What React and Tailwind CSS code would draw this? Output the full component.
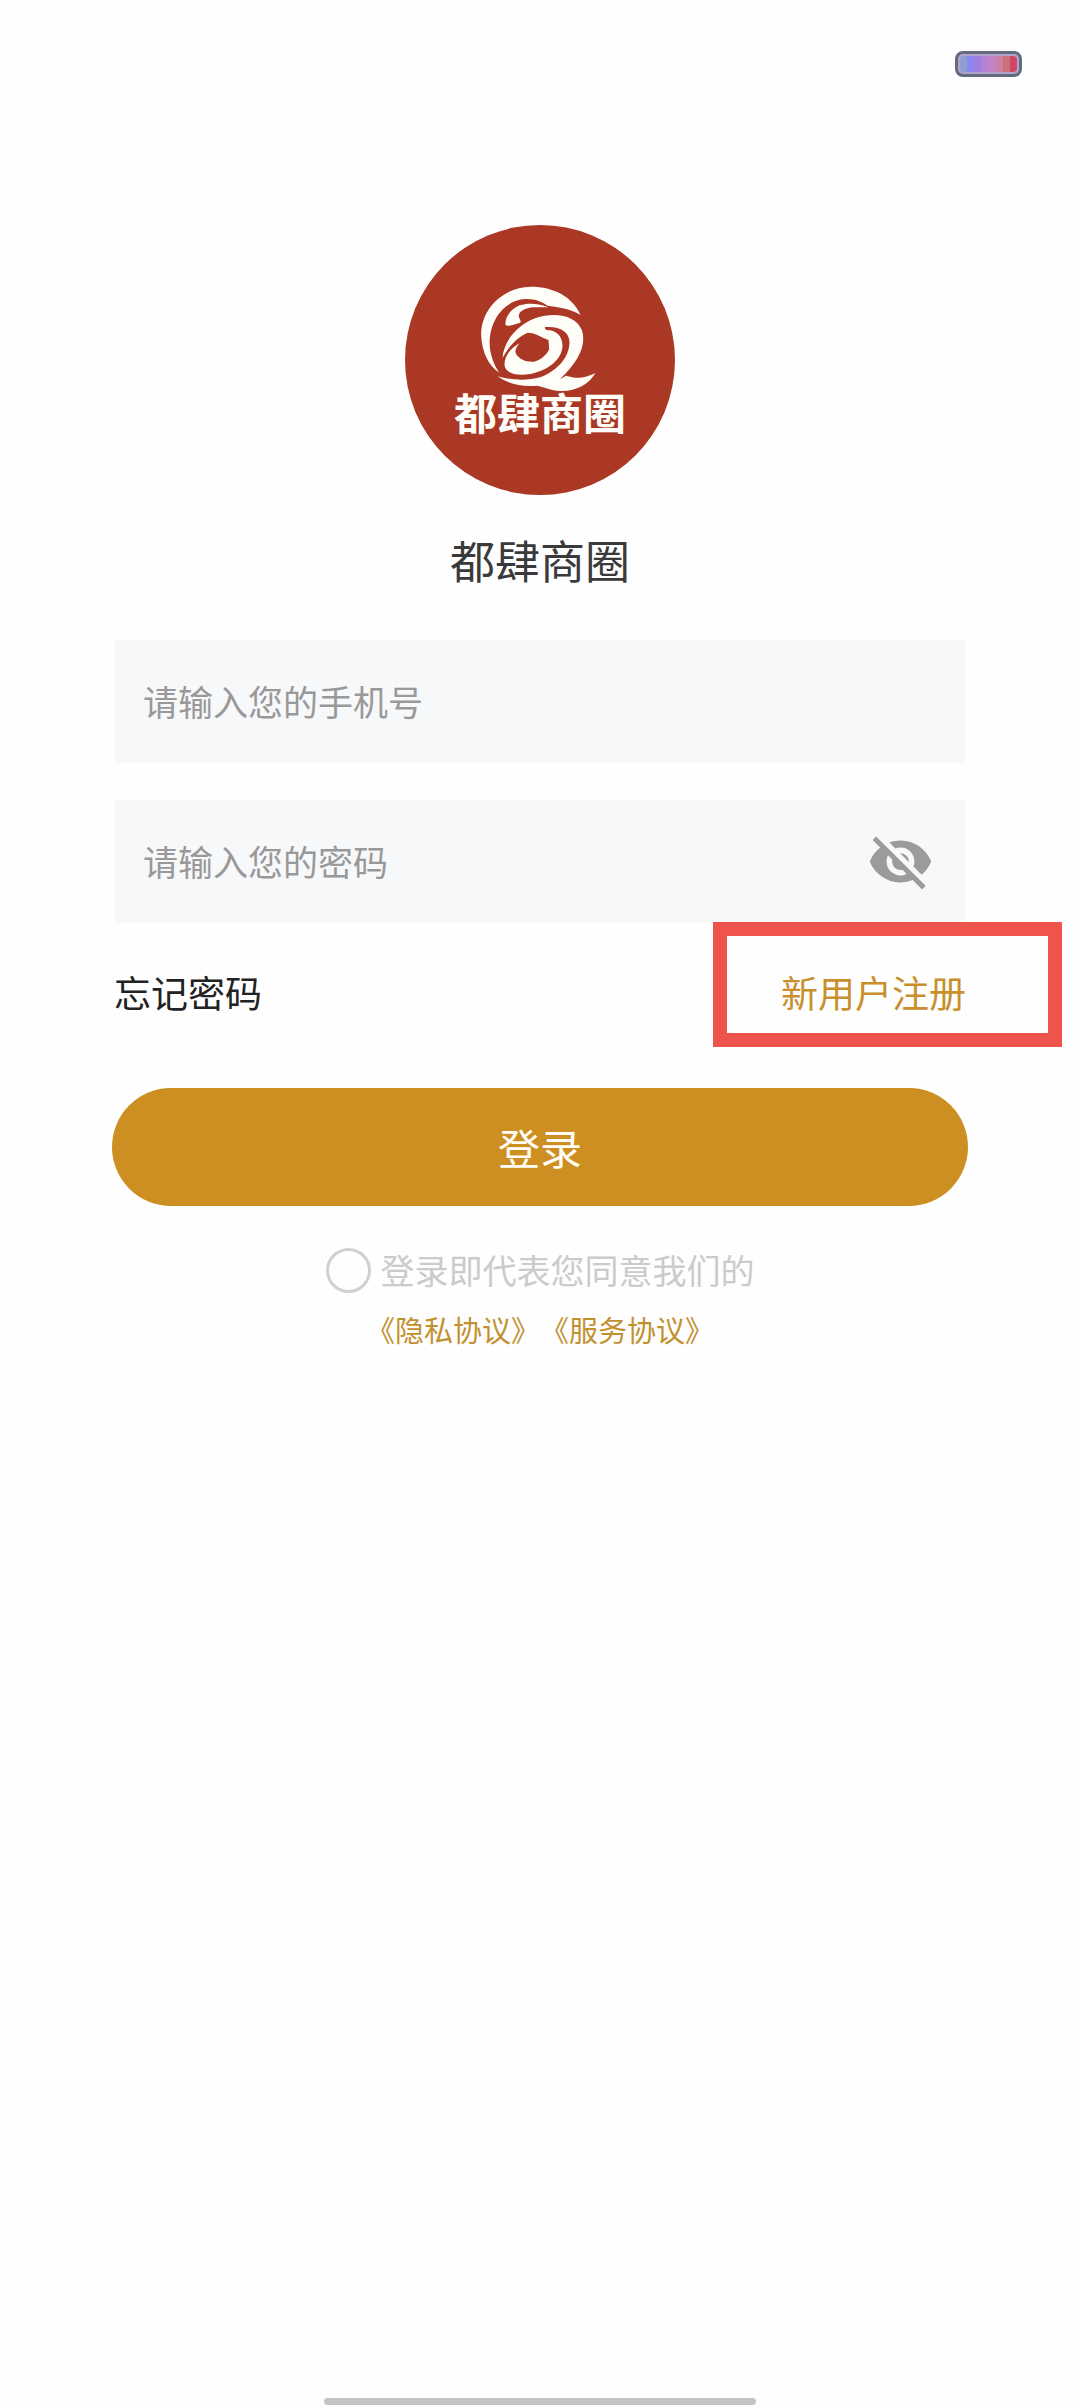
import React, { useState } from "react";
import { MdVisibility, MdVisibilityOff } from "react-icons/md";

const batteryColors = [
  "bg-[#8f9fd0]",
  "bg-[#8a86ee]",
  "bg-[#9d80e2]",
  "bg-[#b681d6]",
  "bg-[#c583c6]",
  "bg-[#cd7fa3]",
  "bg-[#cc7277]",
  "bg-[#d04669]",
];

const StatusBar = () => (
  <div className="flex justify-end pt-[51px] pr-[58px]">
    <div className="flex h-[26px] w-[67px] rounded-lg border-3 border-[#636b7f] bg-[#b3a3cc] px-[2px] py-[2px]">
      {batteryColors.map((color) => (
        <span key={color} className={`flex-1 first:rounded-l-sm last:rounded-r-sm ${color}`} />
      ))}
    </div>
  </div>
);

const Logo = () => (
  <div className="flex size-[270px] flex-col items-center rounded-full bg-[#aa3824] pt-[61px] text-[#fffdf8]">
    <svg viewBox="60 48 350 318" className="mr-1 h-[106px] w-[117px]" fill="currentColor" aria-hidden="true">
      <path d="M361 135C338 80 280 50 212 50C130 52 62 115 63 196C65 245 85 288 117 308C96 275 86 240 89 205C94 140 140 90 195 87C225 86 245 95 262 107C290 112 325 112 361 135Z" />
      <path d="M264 112C240 101 205 97 178 106C150 118 134 143 136 164C142 172 160 164 180 158C184 152 178 147 176 140C174 124 195 114 220 112Z" />
      <path d="M127 264C130 215 170 165 225 145C285 125 345 135 365 180C380 225 355 275 299 328L318 317C345 325 365 328 406 309C385 345 345 365 300 363C270 361 255 352 232 347C185 352 140 340 112 319C150 330 200 333 240 322C295 300 328 260 328 215C326 185 300 168 255 171C252 177 258 181 270 181C295 186 308 205 307 230C303 270 265 300 210 312C170 318 135 310 133 285C132 260 150 235 178 220C170 230 163 240 167 250C175 268 200 278 222 275C245 270 262 250 267 238L265 210C245 203 225 188 203 188C165 205 145 232 127 264Z" />
    </svg>
    <span className="text-[43px] leading-[39px] font-bold">都肆商圈</span>
  </div>
);

const fieldClass =
  "flex h-[122px] items-center bg-[#f7f8fa] pl-7 pr-[31px] shadow-[0_0_4px_#f7f8fa]";
const inputClass =
  "min-w-0 flex-1 bg-transparent text-[35px] leading-[48px] text-[#222] outline-none placeholder:text-[#999]";

const App = () => {
  const [phone, setPhone] = useState("");
  const [password, setPassword] = useState("");
  const [showPassword, setShowPassword] = useState(false);
  const [agreed, setAgreed] = useState(false);

  return (
    <div className="flex min-h-screen flex-col bg-[#fefefe] font-['Noto_Sans_CJK_SC',sans-serif]">
      <StatusBar />

      <main className="mt-[148px] flex flex-col items-center px-28">
        <Logo />
        <h1 className="mt-9 text-[45px] leading-[58px] font-normal text-[#3a3a3a]">都肆商圈</h1>

        <form className="mt-[51px] w-full" onSubmit={(e) => e.preventDefault()}>
          <div className="flex flex-col gap-[38px] px-[3px]">
            <div className={fieldClass}>
              <input
                type="tel"
                aria-label="手机号"
                placeholder="请输入您的手机号"
                value={phone}
                onChange={(e) => setPhone(e.target.value)}
                className={inputClass}
              />
            </div>
            <div className={fieldClass}>
              <input
                type={showPassword ? "text" : "password"}
                aria-label="密码"
                placeholder="请输入您的密码"
                value={password}
                onChange={(e) => setPassword(e.target.value)}
                className={inputClass}
              />
              <button
                type="button"
                aria-label="显示密码"
                onClick={() => setShowPassword(!showPassword)}
                className="text-[#9b9b9b]">
                {showPassword ? <MdVisibility size={67} /> : <MdVisibilityOff size={67} />}
              </button>
            </div>
          </div>

          <div className="mt-[46px] flex items-center justify-between px-[2px] text-[37px] leading-[48px]">
            <a href="#forgot" className="text-[#222]">忘记密码</a>
            <a href="#register" className="relative text-[#c88f2c]">
              新用户注册
              <span className="absolute -top-[46px] -right-[96px] h-[125px] w-[349px] border-14 border-[#ee534c]" />
            </a>
          </div>

          <button
            type="submit"
            className="mt-[72px] h-[118px] w-full rounded-full bg-[#cd8f22] text-[42px] leading-[60px] text-[#fffdf5]">
            登录
          </button>

          <label className="mt-10 flex items-center justify-center gap-[10px] text-[34px] leading-[48px] text-[#cbcbcb]">
            <input
              type="checkbox"
              checked={agreed}
              onChange={(e) => setAgreed(e.target.checked)}
              className="size-[45px] appearance-none rounded-full border-3 border-[#d0d0d0] checked:bg-[#cd8f22]"
            />
            登录即代表您同意我们的
          </label>

          <div className="mt-4 flex justify-center text-[29px] leading-[38px] text-[#c2912f]">
            <a href="#privacy">《隐私协议》</a>
            <a href="#terms">《服务协议》</a>
          </div>
        </form>
      </main>

      {/* home indicator */}
      <div className="mx-auto mt-auto mb-[3px] h-[7px] w-2/5 rounded-full bg-[#c3c3c3]" />
    </div>
  );
};

export default App;
